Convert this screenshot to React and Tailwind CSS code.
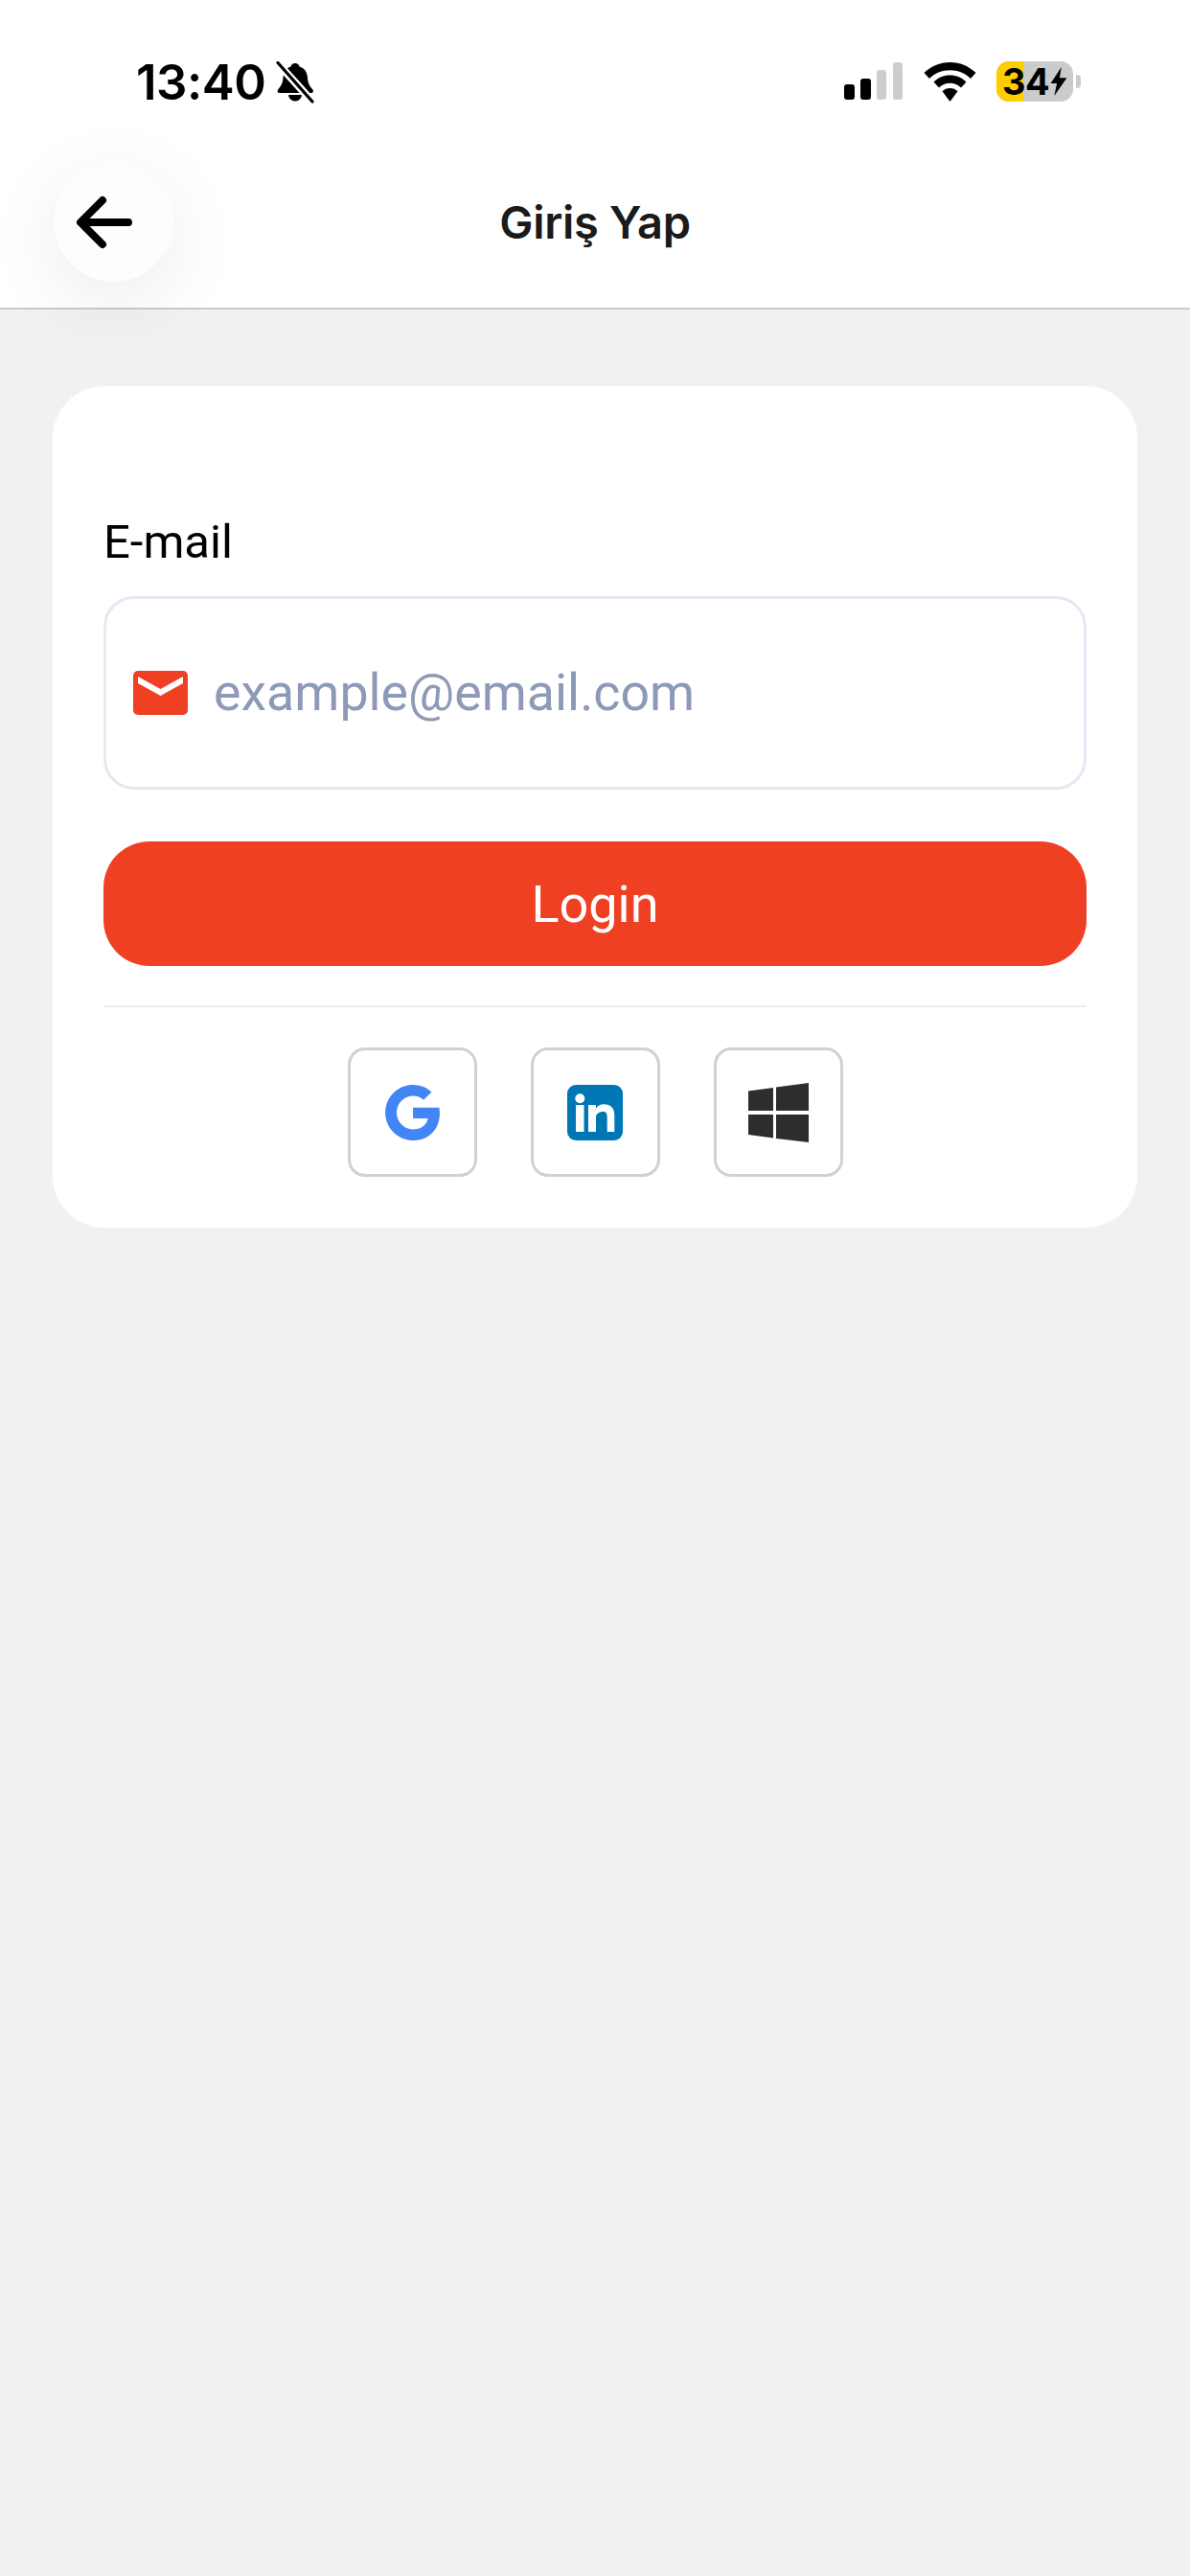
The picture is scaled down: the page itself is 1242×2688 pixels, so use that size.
export default function App() {
  const roboto = "font-['Roboto',sans-serif]";
  return (
    <div className="min-h-screen bg-[#f1f1f2] flex flex-col">
      <header className="relative z-10 bg-white border-b-2 border-[#cbcbcb] h-[323px] flex flex-col">
        <div className="h-[130px] flex items-start justify-between pt-[61px] pl-[142px] pr-[114px]">
          <div className="flex items-center gap-[10px]">
            <span className="font-['Inter',sans-serif] font-semibold text-[51px] leading-[50px] text-black tracking-[-0.5px]">13:40</span>
            <svg width="42" height="44" viewBox="0 0 42 44" className="block">
              <path d="M21 2c2.500 0 4 1.500 4.500 3.500C31 7 33.500 11.500 34 17c.4 5 1.500 8 5 12 1.500 2 1 4-1.500 4H5c-2.500 0-3-2-1.500-4 3.500-4 4.600-7 5-12C9 11.500 11 7 16.500 5.500 17 3.500 18.500 2 21 2z" fill="#000" />
              <path d="M14 35h14c-.5 4-3.500 6.500-7 6.500S14.500 39 14 35z" fill="#000" />
              <path d="M2 1 40 43" stroke="#fff" strokeWidth="8" />
              <path d="M3 1.500 39 42" stroke="#000" strokeWidth="3.200" strokeLinecap="round" />
            </svg>
          </div>
          <div className="flex items-start gap-[21px] mt-[4px]">
            <svg width="62" height="40" viewBox="0 0 62 40" className="block">
              <rect x="0" y="23" width="11" height="16" rx="3" fill="#000" />
              <rect x="17" y="17" width="11" height="22" rx="3" fill="#000" />
              <rect x="34" y="8" width="10" height="31" rx="3" fill="#cdcdcd" />
              <rect x="51" y="0" width="10" height="39" rx="3" fill="#cdcdcd" />
            </svg>
            <svg width="55" height="41" viewBox="0 0 55 41" className="block">
              <path d="M27.500 0C38 0 47.500 4.200 54.500 11L49 17C43.500 11.500 36 8.300 27.500 8.300S11.500 11.500 6 17L.5 11C7.500 4.200 17 0 27.500 0z" fill="#000" />
              <path d="M27.500 13.500c6.500 0 12.500 2.600 17 7l-5.500 6c-3-3-7-4.800-11.500-4.800S19 23.500 16 26.500l-5.500-6c4.500-4.400 10.500-7 17-7z" fill="#000" />
              <path d="M27.500 27c3.200 0 6 1.200 8 3.300L27.500 41l-8-10.700c2-2.100 4.800-3.300 8-3.300z" fill="#000" />
            </svg>
            <div className="flex items-center gap-[3px] -mt-[1px]">
              <div className="relative w-[80px] h-[42px] rounded-[13px] bg-[#cbcbcb]">
                <div className="absolute inset-y-0 left-0 w-[28px] rounded-l-[13px] bg-[#ffcc00]" />
                <div className="relative h-full flex items-center pl-[6px]">
                  <span className="font-['Inter',sans-serif] font-bold text-[38px] leading-[42px] text-black tracking-[-0.5px]">34</span>
                  <svg width="20" height="30" viewBox="0 0 20 32" className="block">
                    <path d="M13 0 1 18h7l-3 14L19 12h-8z" fill="#000" />
                  </svg>
                </div>
              </div>
              <div className="w-[5px] h-[14px] rounded-r-[4px] bg-[#cbcbcb]" />
            </div>
          </div>
        </div>
        <div className="grid grid-cols-[1fr_auto_1fr] items-start px-[56px] pt-[39px]">
          <button className="w-[125px] h-[125px] rounded-full bg-[#fdfdfd] flex items-center justify-center pr-[20px] shadow-[0_20px_80px_rgba(0,0,0,0.08)]">
            <svg width="60" height="56" viewBox="0 0 60 56" fill="none" className="block">
              <path d="M55 28H6M28 5 5 28l23 23" stroke="#000" strokeWidth="8" strokeLinecap="round" strokeLinejoin="round" />
            </svg>
          </button>
          <h1 className="font-['Inter',sans-serif] font-semibold text-[47px] leading-[125px] tracking-[-0.3px] text-[#1a1a1a]">Giriş Yap</h1>
          <div />
        </div>
      </header>

      <main className="px-[55px] pt-[80px]">
        <section className="bg-white rounded-[54px] px-[53px] pt-[135px] pb-[53px]">
          <label className={`block ${roboto} text-[49px] leading-[56px] text-black mb-[28px]`}>E-mail</label>
          <div className="h-[202px] rounded-[32px] border-[3px] border-[#e3e8f2] flex items-center pl-[28px] gap-[27px]">
            <svg width="57" height="46" viewBox="0 0 57 46" className="block shrink-0">
              <rect width="57" height="46" rx="5" fill="#f04023" />
              <path d="M5 6 28.500 19 52 6v7L28.500 26 5 13z" fill="#fff" />
            </svg>
            <span className={`${roboto} text-[53.700px] leading-[60px] text-[#8d9ab7]`}>example@email.com</span>
          </div>
          <button className={`mt-[54px] w-full h-[130px] rounded-[48px] bg-[#f04023] text-white ${roboto} text-[54px]`}>Login</button>
          <div className="mt-[41px] h-[2px] bg-[#e9edf3]" />
          <div className="mt-[42px] flex justify-center gap-[56px]">
            <button className="w-[135px] h-[135px] rounded-[18px] border-[3px] border-[#d1d1d1] flex items-center justify-center">
              <svg width="57" height="58" viewBox="2 2 43.120 44" className="block">
                <path fill="#4285f4" d="M45.120 24.500c0-1.560-.14-3.060-.4-4.500H24v8.510h11.840c-.51 2.750-2.060 5.080-4.390 6.640v5.520h7.110c4.160-3.830 6.560-9.470 6.560-16.170z" />
                <path fill="#4285f4" d="M24 46c5.940 0 10.920-1.970 14.560-5.330l-7.110-5.520c-1.970 1.320-4.490 2.100-7.450 2.100-5.730 0-10.580-3.870-12.310-9.070H4.340v5.700C7.960 41.070 15.400 46 24 46z" />
                <path fill="#4285f4" d="M11.690 28.180C11.250 26.860 11 25.450 11 24s.25-2.860.69-4.180v-5.700H4.340C2.850 17.090 2 20.450 2 24c0 3.550.85 6.910 2.340 9.880l7.350-5.700z" />
                <path fill="#4285f4" d="M24 10.750c3.230 0 6.130 1.110 8.410 3.290l6.310-6.310C34.910 4.180 29.930 2 24 2 15.400 2 7.960 6.930 4.340 14.120l7.350 5.700c1.730-5.200 6.580-9.070 12.310-9.070z" />
              </svg>
            </button>
            <button className="w-[135px] h-[135px] rounded-[18px] border-[3px] border-[#d1d1d1] flex items-center justify-center">
              <svg width="58" height="58" viewBox="0 0 58 58" className="block">
                <rect width="58" height="58" rx="9" fill="#0077b5" />
                <circle cx="13.300" cy="14.300" r="5" fill="#fff" />
                <rect x="9" y="21" width="8.500" height="28" fill="#fff" />
                <path d="M22 21h8v3.800C31.500 22 34.500 20.300 38 20.300c8 0 11.300 4.500 11.300 11.700v17H41.700V33.500c0-3-1-5.500-4-5.500-3.700 0-7.700 2-7.700 5.500V49H22z" fill="#fff" />
              </svg>
            </button>
            <button className="w-[135px] h-[135px] rounded-[18px] border-[3px] border-[#d1d1d1] flex items-center justify-center">
              <svg width="63" height="62" viewBox="0 0 63 62" className="block">
                <path fill="#2d2d2d" d="M0 8.500 26 5V29H0zM29 4.500 63 0V29H29zM0 33H26V57.500L0 54zM29 33H63V62L29 58z" />
              </svg>
            </button>
          </div>
        </section>
      </main>
    </div>
  );
}
